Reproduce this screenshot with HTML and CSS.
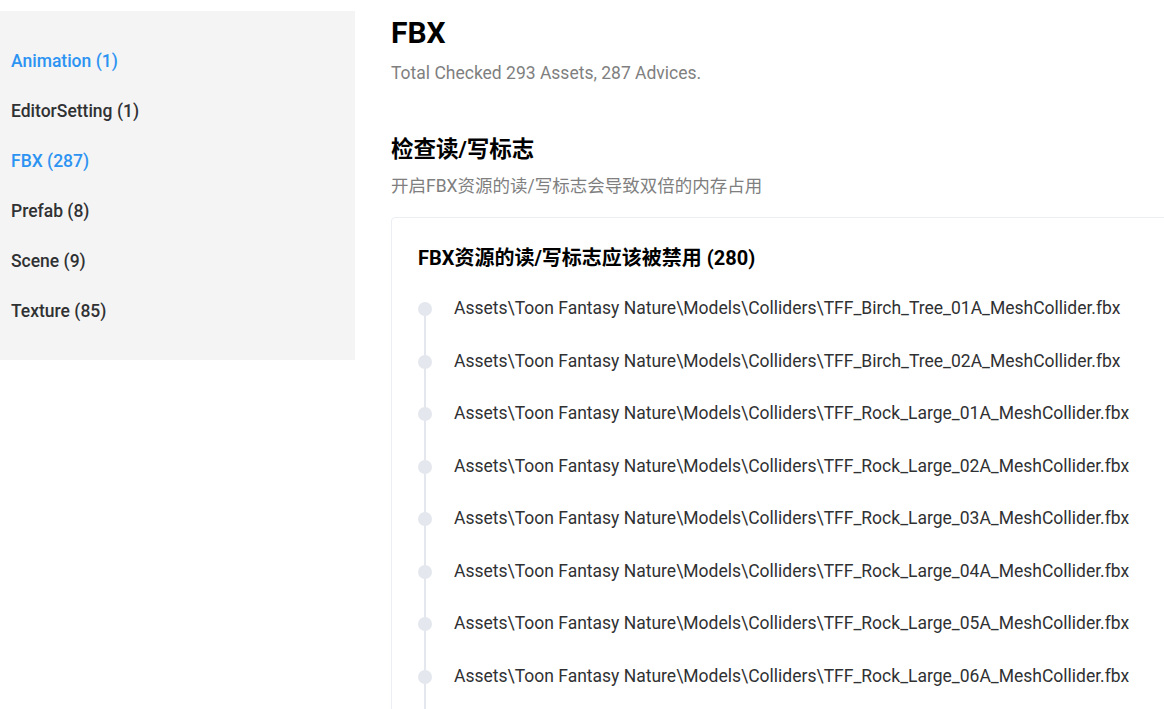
FILE: index.html
```html
<!DOCTYPE html>
<html lang="zh">
<head>
<meta charset="utf-8">
<title>FBX</title>
<link rel="stylesheet" href="styles.css">
</head>
<body>
<div class="layout">
  <nav class="sidebar">
    <a class="nav-item active">Animation (1)</a>
    <a class="nav-item">EditorSetting (1)</a>
    <a class="nav-item active">FBX (287)</a>
    <a class="nav-item">Prefab (8)</a>
    <a class="nav-item">Scene (9)</a>
    <a class="nav-item">Texture (85)</a>
  </nav>
  <main class="main">
    <h1 class="title">FBX</h1>
    <p class="subtitle">Total Checked 293 Assets, 287 Advices.</p>
    <h2 class="section-title">检查读/写标志</h2>
    <p class="section-desc">开启FBX资源的读/写标志会导致双倍的内存占用</p>
    <div class="card">
      <h3 class="card-title">FBX资源的读/写标志应该被禁用 (280)</h3>
      <ul class="timeline">
        <li class="tl-item">Assets\Toon Fantasy Nature\Models\Colliders\TFF_Birch_Tree_01A_MeshCollider.fbx</li>
        <li class="tl-item">Assets\Toon Fantasy Nature\Models\Colliders\TFF_Birch_Tree_02A_MeshCollider.fbx</li>
        <li class="tl-item">Assets\Toon Fantasy Nature\Models\Colliders\TFF_Rock_Large_01A_MeshCollider.fbx</li>
        <li class="tl-item">Assets\Toon Fantasy Nature\Models\Colliders\TFF_Rock_Large_02A_MeshCollider.fbx</li>
        <li class="tl-item">Assets\Toon Fantasy Nature\Models\Colliders\TFF_Rock_Large_03A_MeshCollider.fbx</li>
        <li class="tl-item">Assets\Toon Fantasy Nature\Models\Colliders\TFF_Rock_Large_04A_MeshCollider.fbx</li>
        <li class="tl-item">Assets\Toon Fantasy Nature\Models\Colliders\TFF_Rock_Large_05A_MeshCollider.fbx</li>
        <li class="tl-item">Assets\Toon Fantasy Nature\Models\Colliders\TFF_Rock_Large_06A_MeshCollider.fbx</li>
        <li class="tl-item tl-last"></li>
      </ul>
    </div>
  </main>
</div>
</body>
</html>
```
FILE: styles.css
```css
* { box-sizing: border-box; }
html, body {
  margin: 0;
  padding: 0;
  height: 100%;
  overflow: hidden;
  background: #fff;
  font-family: Roboto, "Noto Sans CJK SC", sans-serif;
  color: #303133;
}
.layout {
  display: flex;
  align-items: flex-start;
  gap: 36px;
}
.sidebar {
  flex: 0 0 355px;
  margin-top: 11px;
  background: #f4f4f4;
  padding: 25px 0 24px 11px;
  display: flex;
  flex-direction: column;
}
.nav-item {
  display: block;
  height: 50px;
  line-height: 50px;
  font-size: 17.5px;
  font-weight: 500;
  color: #303133;
  text-decoration: none;
}
.nav-item.active { color: #2d93f2; }
.main {
  flex: 0 0 820px;
  padding-top: 13px;
}
.title {
  margin: 0;
  font-size: 30px;
  line-height: 40px;
  font-weight: 700;
  color: #000;
}
.subtitle {
  margin: 8px 0 0;
  font-size: 17.5px;
  line-height: 24px;
  color: #7f7f7f;
}
.section-title {
  margin: 49px 0 0;
  font-size: 22.5px;
  line-height: 30px;
  font-weight: 700;
  color: #000;
}
.section-desc {
  margin: 10px 0 0;
  font-size: 17.5px;
  line-height: 24px;
  color: #7f7f7f;
}
.card {
  margin-top: 19px;
  border: 1px solid #ebeef5;
  border-radius: 4px;
  padding: 26px 26px 0;
  min-height: 600px;
}
.card-title {
  margin: 0;
  font-size: 20px;
  line-height: 28px;
  font-weight: 700;
  color: #000;
}
.timeline {
  list-style: none;
  margin: 24px 0 0;
  padding: 0;
}
.tl-item {
  position: relative;
  padding-left: 36px;
  font-size: 17.5px;
  line-height: 24px;
  height: 52.5px;
  color: #303133;
  white-space: nowrap;
}
.tl-item::after {
  content: "";
  position: absolute;
  left: 6px;
  top: 14px;
  width: 2px;
  height: 52.5px;
  background: #e4e7ed;
}
.tl-item::before {
  content: "";
  position: absolute;
  left: 0;
  top: 6px;
  width: 14px;
  height: 14px;
  border-radius: 50%;
  background: #e4e7ed;
  z-index: 1;
}
.tl-last::before { display: none; }
```
